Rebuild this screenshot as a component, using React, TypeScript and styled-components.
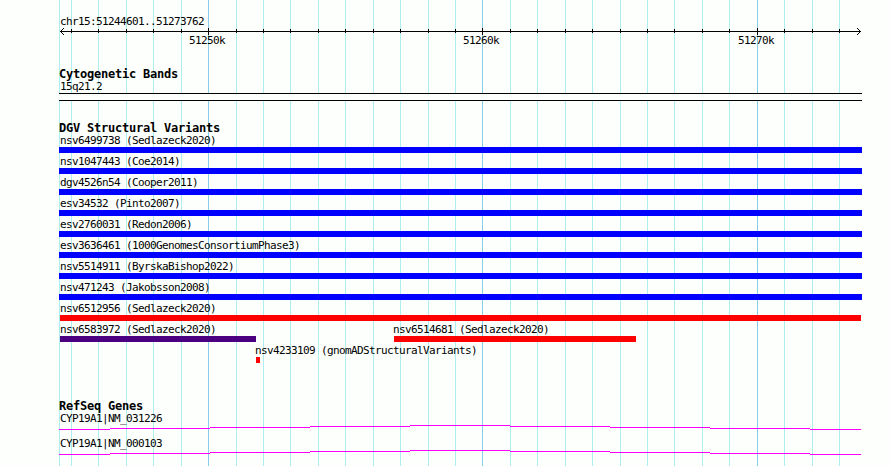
import React from 'react';
import styled, { createGlobalStyle } from 'styled-components';

const GlobalStyle = createGlobalStyle`
  body {
    margin: 0;
    background: #fdfffc;
  }
`;

const colors = {
  background: '#fdfffc',
  gridMinor: '#afeeee',
  gridMajor: '#87ceeb',
  blue: '#0000ff',
  red: '#ff0000',
  purple: '#4b0082',
  gene: '#ff00ff',
};

// all positions are relative to the left edge of the panel
const PANEL_WIDTH = 803;
const PANEL_HEIGHT = 466;

const minorTicks = [
  12, 39, 67, 94, 122, 177, 204, 231, 259, 286, 314, 341, 369, 396, 451, 478,
  506, 533, 561, 588, 615, 643, 670, 725, 753, 780,
];

const majorTicks = [
  { x: 149, label: '51250k' },
  { x: 423, label: '51260k' },
  { x: 698, label: '51270k' },
];

interface Variant {
  name: string;
  start: number;
  end: number;
  color: string;
}

const full = (name: string): Variant => ({
  name,
  start: 0,
  end: PANEL_WIDTH,
  color: colors.blue,
});

const variantRows: Variant[][] = [
  [full('nsv6499738 (Sedlazeck2020)')],
  [full('nsv1047443 (Coe2014)')],
  [full('dgv4526n54 (Cooper2011)')],
  [full('esv34532 (Pinto2007)')],
  [full('esv2760031 (Redon2006)')],
  [full('esv3636461 (1000GenomesConsortiumPhase3)')],
  [full('nsv5514911 (ByrskaBishop2022)')],
  [full('nsv471243 (Jakobsson2008)')],
  [{ name: 'nsv6512956 (Sedlazeck2020)', start: 1, end: 802, color: colors.red }],
  [
    { name: 'nsv6583972 (Sedlazeck2020)', start: 1, end: 197, color: colors.purple },
    { name: 'nsv6514681 (Sedlazeck2020)', start: 335, end: 577, color: colors.red },
  ],
  [
    {
      name: 'nsv4233109 (gnomADStructuralVariants)',
      start: 197,
      end: 201,
      color: colors.red,
    },
  ],
];

const genes = ['CYP19A1|NM_031226', 'CYP19A1|NM_000103'];

// x, y, width of every step of the intron line
const geneSteps = [
  [0, 4, 51],
  [51, 3, 100],
  [151, 2, 100],
  [251, 1, 100],
  [351, 0, 100],
  [451, 1, 100],
  [551, 2, 100],
  [651, 3, 100],
  [751, 4, 51],
];

const Panel = styled.div`
  display: grid;
  width: ${PANEL_WIDTH}px;
  height: ${PANEL_HEIGHT}px;
  margin-left: 59px;
  overflow: hidden;
  color: #000;
  font-family: 'DejaVu Sans Mono', 'Liberation Mono', monospace;
`;

const GridLines = styled.svg`
  grid-area: 1 / 1;
  display: block;
`;

const Tracks = styled.div`
  grid-area: 1 / 1;
  min-width: 0;
  padding-top: 13px;
`;

const Label = styled.div`
  height: 15px;
  padding-left: 1px;
  font-size: 11px;
  line-height: 17px;
  letter-spacing: -0.622px;
  white-space: pre;
`;

const Title = styled.div`
  height: 12px;
  font-size: 12px;
  font-weight: bold;
  line-height: 16px;
  letter-spacing: -0.224px;
  white-space: pre;
`;

const Track = styled.section<{ $gap: number }>`
  margin-top: ${({ $gap }) => $gap}px;
`;

const RulerLine = styled.svg`
  display: block;
`;

const RulerLabels = styled.div`
  display: flex;
  margin-top: -3px;
`;

const RulerLabel = styled(Label)<{ $gap: number }>`
  width: 36px;
  padding: 0;
  margin-left: ${({ $gap }) => $gap}px;
`;

const Band = styled.div`
  height: 6px;
  border-top: 1px solid #000;
  border-bottom: 1px solid #000;
  background: ${colors.background};
`;

const Row = styled.div`
  display: flex;
`;

const Feature = styled.div<{ $gap: number; $width: number }>`
  flex: none;
  width: ${({ $width }) => $width}px;
  margin-left: ${({ $gap }) => $gap}px;
`;

const FeatureName = styled(Label)<{ $inset: number }>`
  padding-left: 0;
  margin-left: ${({ $inset }) => $inset}px;
`;

const Bar = styled.div<{ $color: string }>`
  height: 6px;
  background: ${({ $color }) => $color};
`;

const Gene = styled.div`
  height: 25px;
`;

const GeneLine = styled.svg`
  display: block;
`;

const Grid = () => (
  <GridLines width={PANEL_WIDTH} height={PANEL_HEIGHT} shapeRendering="crispEdges">
    {[0, ...minorTicks].map((x) => (
      <rect key={x} x={x} y={0} width={1} height={PANEL_HEIGHT} fill={colors.gridMinor} />
    ))}
    {majorTicks.map(({ x }) => (
      <rect key={x} x={x} y={0} width={1} height={PANEL_HEIGHT} fill={colors.gridMajor} />
    ))}
  </GridLines>
);

const Ruler = () => (
  <>
    <Label>chr15:51244601..51273762</Label>
    <RulerLine width={PANEL_WIDTH} height={7} shapeRendering="crispEdges">
      <rect x={1} y={3} width={801} height={1} />
      {[1, 2, 3].map((d) => (
        <React.Fragment key={d}>
          <rect x={1 + d} y={3 - d} width={1} height={1} />
          <rect x={1 + d} y={3 + d} width={1} height={1} />
          <rect x={801 - d} y={3 - d} width={1} height={1} />
          <rect x={801 - d} y={3 + d} width={1} height={1} />
        </React.Fragment>
      ))}
      {minorTicks.map((x) => (
        <rect key={x} x={x} y={1} width={1} height={4} />
      ))}
      {majorTicks.map(({ x }) => (
        <rect key={x} x={x} y={0} width={1} height={7} />
      ))}
    </RulerLine>
    <RulerLabels>
      {majorTicks.map(({ x, label }, i) => (
        <RulerLabel key={label} $gap={i === 0 ? x - 19 : x - majorTicks[i - 1].x - 36}>
          {label}
        </RulerLabel>
      ))}
    </RulerLabels>
  </>
);

// names never start left of the first panel pixel
const nameInset = (start: number) => (start > 1 ? -1 : 1 - start);

const VariantRow = ({ variants }: { variants: Variant[] }) => (
  <Row>
    {variants.map(({ name, start, end, color }, i) => (
      <Feature
        key={name}
        $gap={i === 0 ? start : start - variants[i - 1].end}
        $width={end - start}
      >
        <FeatureName $inset={nameInset(start)}>{name}</FeatureName>
        <Bar $color={color} />
      </Feature>
    ))}
  </Row>
);

export default function App() {
  return (
    <>
      <GlobalStyle />
      <Panel>
        <Grid />
        <Tracks>
          <Ruler />
          <Track $gap={19}>
            <Title>Cytogenetic Bands</Title>
            <Label>15q21.2</Label>
            <Band />
          </Track>
          <Track $gap={19}>
            <Title>DGV Structural Variants</Title>
            {variantRows.map((variants) => (
              <VariantRow key={variants[0].name} variants={variants} />
            ))}
          </Track>
          <Track $gap={35}>
            <Title>RefSeq Genes</Title>
            {genes.map((gene) => (
              <Gene key={gene}>
                <Label>{gene}</Label>
                <GeneLine width={PANEL_WIDTH} height={5} shapeRendering="crispEdges">
                  {geneSteps.map(([x, y, width]) => (
                    <rect key={x} x={x} y={y} width={width} height={1} fill={colors.gene} />
                  ))}
                </GeneLine>
              </Gene>
            ))}
          </Track>
        </Tracks>
      </Panel>
    </>
  );
}
